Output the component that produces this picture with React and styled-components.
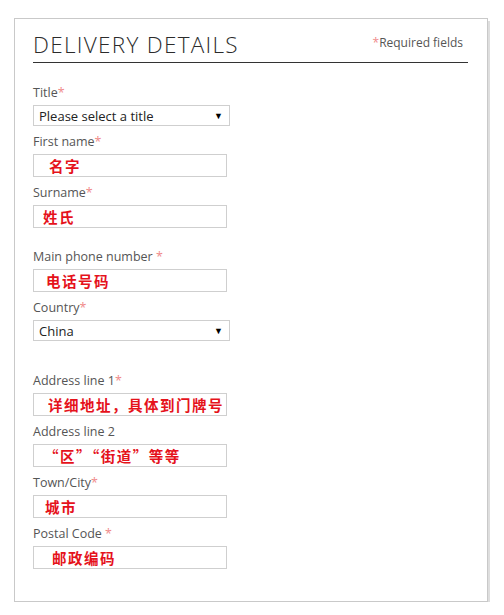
import React from 'react';
import styled, { createGlobalStyle } from 'styled-components';

const Global = createGlobalStyle`
	body {
		margin: 0;
		background: #fff;
		font-family: "Open Sans", "Liberation Sans", sans-serif;
	}
`;

const Page = styled.div`
	padding: 18px 0 0 14px;
`;

const Panel = styled.div`
	box-sizing: border-box;
	width: 474px;
	height: 584px;
	border: 1px solid #c9c9c9;
	box-shadow: 2px 3px 0 #dedede;
	padding: 12px 19px 0 18px;
`;

const Header = styled.div`
	display: flex;
	justify-content: space-between;
	align-items: flex-end;
	border-bottom: 1px solid #333;
	padding-bottom: 3px;
	padding-right: 5px;
`;

const Heading = styled.h1`
	margin: 0;
	font-family: "Open Sans", sans-serif;
	font-weight: 300;
	font-size: 22.5px;
	line-height: 28px;
	color: #2b2b2b;
	letter-spacing: 1.3px;
`;

const Required = styled.span`
	font-size: 12px;
	color: #555;
	margin-bottom: 8px;
`;

const Star = styled.span`
	color: #f08a8a;
`;

const Form = styled.form`
	padding-top: 22px;
`;

const Field = styled.div`
	padding-top: ${(p) => p.$gap || 0}px;
	margin-bottom: 8px;
`;

const Label = styled.label`
	display: block;
	font-size: 12.5px;
	line-height: 16px;
	color: #555;
	margin-bottom: 4px;
`;

const Select = styled.div`
	box-sizing: border-box;
	display: flex;
	justify-content: space-between;
	align-items: center;
	width: 197px;
	height: 21px;
	border: 1px solid #cfcfcf;
	padding: 0 6px 0 5px;
	font-size: 13px;
	color: #222;
`;

const Arrow = styled.span`
	font-size: 9px;
	color: #000;
`;

const Input = styled.input`
	display: block;
	box-sizing: border-box;
	width: 194px;
	height: 23px;
	border: 1px solid #cfcfcf;
	padding: 0 0 0 ${(p) => p.$indent}px;
	font-family: "Noto Sans CJK SC", sans-serif;
	font-weight: 700;
	font-size: 14.5px;
	letter-spacing: 1.5px;
	color: #e5121b;
	outline: none;
	background: #fff;
`;

const fields = [
	{ label: 'First name', star: '*', value: '名字', indent: 15 },
	{ label: 'Surname', star: '*', value: '姓氏', indent: 9 },
	{ label: 'Main phone number ', star: '*', value: '电话号码', indent: 12, gap: 13 },
];

const address = [
	{ label: 'Address line 1', star: '*', value: '详细地址，具体到门牌号', indent: 14, gap: 24 },
	{ label: 'Address line 2', star: '', value: '“区”“街道”等等', indent: 10 },
	{ label: 'Town/City', star: '*', value: '城市', indent: 11 },
	{ label: 'Postal Code ', star: '*', value: '邮政编码', indent: 18 },
];

function TextField({ f }) {
	return (
		<Field $gap={f.gap}>
			<Label>
				{f.label}
				{f.star && <Star>{f.star}</Star>}
			</Label>
			<Input readOnly value={f.value} $indent={f.indent} />
		</Field>
	);
}

export default function App() {
	return (
		<Page>
			<Global />
			<Panel>
				<Header>
					<Heading>DELIVERY DETAILS</Heading>
					<Required>
						<Star>*</Star>Required fields
					</Required>
				</Header>
				<Form>
					<Field>
						<Label>
							Title<Star>*</Star>
						</Label>
						<Select>
							Please select a title <Arrow>▼</Arrow>
						</Select>
					</Field>
					{fields.map((f) => (
						<TextField key={f.label} f={f} />
					))}
					<Field>
						<Label>
							Country<Star>*</Star>
						</Label>
						<Select>
							China <Arrow>▼</Arrow>
						</Select>
					</Field>
					{address.map((f) => (
						<TextField key={f.label} f={f} />
					))}
				</Form>
			</Panel>
		</Page>
	);
}
